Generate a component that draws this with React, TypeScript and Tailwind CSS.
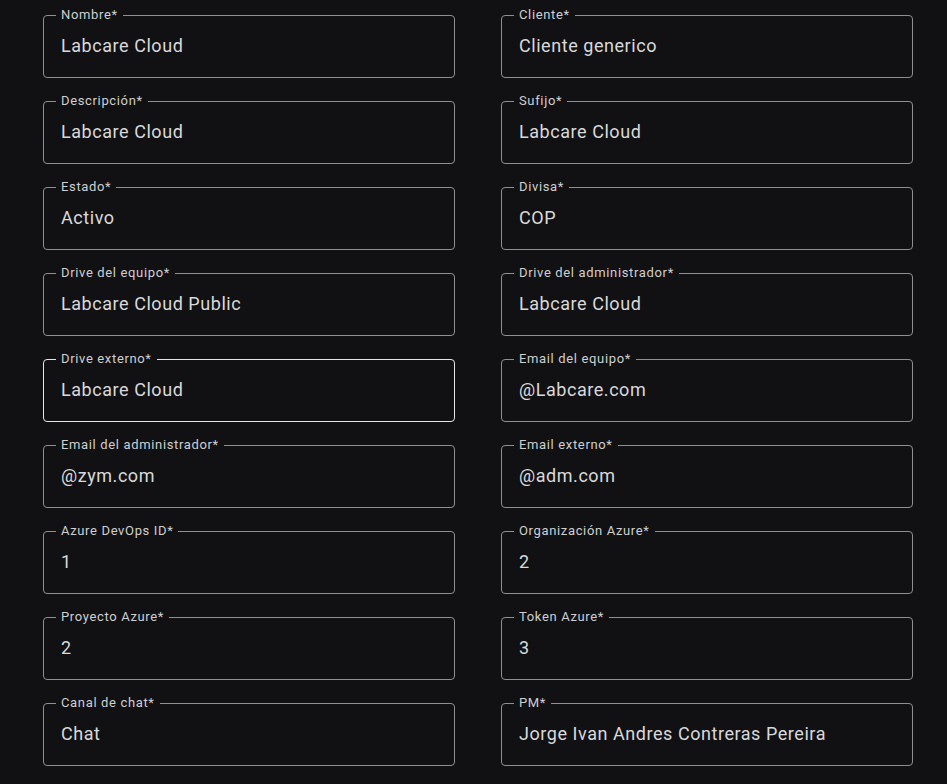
import React from "react";

type Field = {
  label: string;
  value: string;
  active?: boolean;
};

const fields: Field[] = [
  { label: "Nombre*", value: "Labcare Cloud" },
  { label: "Cliente*", value: "Cliente generico" },
  { label: "Descripción*", value: "Labcare Cloud" },
  { label: "Sufijo*", value: "Labcare Cloud" },
  { label: "Estado*", value: "Activo" },
  { label: "Divisa*", value: "COP" },
  { label: "Drive del equipo*", value: "Labcare Cloud Public" },
  { label: "Drive del administrador*", value: "Labcare Cloud" },
  { label: "Drive externo*", value: "Labcare Cloud", active: true },
  { label: "Email del equipo*", value: "@Labcare.com" },
  { label: "Email del administrador*", value: "@zym.com" },
  { label: "Email externo*", value: "@adm.com" },
  { label: "Azure DevOps ID*", value: "1" },
  { label: "Organización Azure*", value: "2" },
  { label: "Proyecto Azure*", value: "2" },
  { label: "Token Azure*", value: "3" },
  { label: "Canal de chat*", value: "Chat" },
  { label: "PM*", value: "Jorge Ivan Andres Contreras Pereira" },
];

function OutlinedField({ label, value, active }: Field) {
  return (
    <fieldset
      className={`h-[70px] rounded-[4px] border px-[12px] ${
        active ? "border-[#e6e6e6]" : "border-[#8f8f92]"
      }`}
    >
      <legend className="px-[5px] text-[13px] leading-[14px] tracking-[0.65px] text-[#cfcfd1]">
        {label}
      </legend>
      <input
        readOnly
        value={value}
        className="mt-[12px] w-full bg-transparent px-[5px] text-[18px] leading-[24px] tracking-[0.55px] text-[#d9d9db] outline-none"
      />
    </fieldset>
  );
}

export default function App() {
  return (
    <div
      className="min-h-[784px] bg-[#111113] pl-[43px] pr-[34px] pt-[8px]"
      style={{ fontFamily: "Roboto, 'Noto Sans', sans-serif" }}
    >
      <div className="grid grid-cols-2 gap-x-[46px] gap-y-[16px]">
        {fields.map((f) => (
          <OutlinedField key={f.label} {...f} />
        ))}
      </div>
    </div>
  );
}
